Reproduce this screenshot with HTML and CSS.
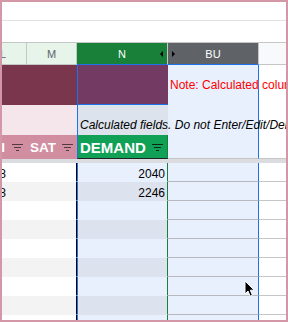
FILE: index.html
```html
<!doctype html>
<html>
<head>
<meta charset="utf-8">
<title>Sheet</title>
<link rel="stylesheet" href="styles.css">
</head>
<body>
<div class="frame">
  <div class="toolbar"></div>
  <div class="formula"></div>

  <div class="row colhead">
    <div class="c-l ch ch-l"><span>L</span></div>
    <div class="c-m ch">M</div>
    <div class="c-n ch ch-n">N<i class="tri tri-left"></i></div>
    <div class="c-bu ch ch-bu"><i class="tri tri-right"></i>BU</div>
    <div class="c-rest ch ch-rest"></div>
  </div>

  <div class="row r1">
    <div class="c-l"></div>
    <div class="c-m"></div>
    <div class="c-n"></div>
    <div class="c-bu"><span class="note">Note: Calculated columns</span></div>
    <div class="c-rest"></div>
  </div>

  <div class="row r2">
    <div class="c-l"></div>
    <div class="c-m"></div>
    <div class="c-n"><span class="calc">Calculated fields. Do not Enter/Edit/Delete</span></div>
    <div class="c-bu"></div>
    <div class="c-rest"></div>
  </div>

  <div class="row r3">
    <div class="c-l hd hd-l"><span>FRI</span><svg class="flt" width="11" height="7" viewBox="0 0 11 7"><path d="M0 .5h11M2 3.5h7M4 6.5h3" stroke="currentColor"/></svg></div>
    <div class="c-m hd"><span>SAT</span><svg class="flt" width="11" height="7" viewBox="0 0 11 7"><path d="M0 .5h11M2 3.5h7M4 6.5h3" stroke="currentColor"/></svg></div>
    <div class="c-n hd hd-n"><span>DEMAND</span><svg class="flt" width="11" height="7" viewBox="0 0 11 7"><path d="M0 .5h11M2 3.5h7M4 6.5h3" stroke="currentColor"/></svg></div>
    <div class="c-bu"></div>
    <div class="c-rest"></div>
  </div>

  <div class="freeze"></div>

  <div class="row dr">
    <div class="c-l"><span>18</span></div><div class="c-m"></div><div class="c-n">2040</div><div class="c-bu"></div><div class="c-rest"></div>
  </div>
  <div class="row dr alt">
    <div class="c-l"><span>18</span></div><div class="c-m"></div><div class="c-n">2246</div><div class="c-bu"></div><div class="c-rest"></div>
  </div>
  <div class="row dr">
    <div class="c-l"></div><div class="c-m"></div><div class="c-n"></div><div class="c-bu"></div><div class="c-rest"></div>
  </div>
  <div class="row dr alt">
    <div class="c-l"></div><div class="c-m"></div><div class="c-n"></div><div class="c-bu"></div><div class="c-rest"></div>
  </div>
  <div class="row dr">
    <div class="c-l"></div><div class="c-m"></div><div class="c-n"></div><div class="c-bu"></div><div class="c-rest"></div>
  </div>
  <div class="row dr alt">
    <div class="c-l"></div><div class="c-m"></div><div class="c-n"></div><div class="c-bu"></div><div class="c-rest"></div>
  </div>
  <div class="row dr">
    <div class="c-l"></div><div class="c-m"></div><div class="c-n"></div><div class="c-bu"></div><div class="c-rest"></div>
  </div>
  <div class="row dr alt">
    <div class="c-l"></div><div class="c-m"></div><div class="c-n"></div><div class="c-bu"></div><div class="c-rest"></div>
  </div>
  <div class="row dr">
    <div class="c-l"></div><div class="c-m"></div><div class="c-n"></div><div class="c-bu"></div><div class="c-rest"></div>
  </div>

  <svg class="cursor" width="12" height="18" viewBox="0 0 12 18"><path d="M1 1L1 14L4 11L6.2 16.2L8.4 15.2L6.3 10.2L10.3 10.2Z" fill="#000" stroke="#fff" stroke-width="1"/></svg>
</div>
</body>
</html>
```

FILE: styles.css
```css
*{ box-sizing:border-box; }
html,body{ margin:0; }
body{ width:288px; height:322px; padding:2px; background:#d497a8; }

.frame{
	position:relative;
	width:284px;
	height:318px;
	background:#fff;
	overflow:hidden;
	font-family:"Liberation Sans", Arial, sans-serif;
	font-size:12px;
}
.toolbar{ height:19px; border-bottom:1px solid #e1e3e1; }
.formula{ height:22px; border-bottom:1px solid #c4c7c5; }

.row{ display:flex; }
.c-l{ width:25px; flex:none; overflow:hidden; }
.c-m{ width:50px; flex:none; }
.c-n{ width:91px; flex:none; }
.c-bu{ width:91px; flex:none; }
.c-rest{ flex:1; }

/* column letters */
.colhead{ height:22px; }
.ch{
	display:flex;
	align-items:center;
	justify-content:center;
	font-size:11px;
	color:#5f6368;
	background:#e6f4ea;
	border-right:1px solid #c4c7c5;
	border-bottom:1px solid #c4c7c5;
}
.ch-l{ justify-content:flex-end; padding-right:20px; }
.ch-l span{ flex:none; }
.ch-n{ position:relative; background:#188038; color:#fff; border-bottom-color:#1a73e8; }
.ch-bu{ position:relative; background:#5f6368; color:#fff; border-bottom-color:#1a73e8; }
.ch-rest{ background:#f8f9fa; border-right:0; }
.tri{ position:absolute; top:8px; width:0; height:0; border-top:3px solid transparent; border-bottom:3px solid transparent; }
.tri-left{ right:4px; border-right:3px solid #000; }
.tri-right{ left:4px; border-left:3px solid #000; }

/* row 1 */
.r1{ height:40px; }
.r1 .c-l,.r1 .c-m{ background:#7a364d; }
.r1 .c-n{ background:#733b63; border-left:1px solid #1a73e8; border-bottom:1px solid #1a73e8; }
.r1 .c-bu{
	display:flex;
	align-items:center;
	padding-left:2px;
	background:#e8f0fe;
	border-right:1px solid #1a73e8;
}
.note{ position:relative; z-index:1; color:#f00; line-height:14px; white-space:nowrap; }

/* row 2 */
.r2{ height:30px; }
.r2 .c-l,.r2 .c-m{ background:#f4e6ea; }
.r2 .c-n{
	display:flex;
	align-items:flex-end;
	padding:0 0 3px 2px;
	background:#dde3ec;
	border-left:1px solid #1a73e8;
}
.r2 .c-bu{ background:#e8f0fe; border-right:1px solid #1a73e8; }
.calc{ position:relative; z-index:1; font-style:italic; line-height:14px; color:#000; white-space:nowrap; }

/* header row */
.r3{ height:24px; }
.r3 > div{ border-bottom:1px solid #c4c7c5; }
.hd{
	display:flex;
	align-items:center;
	justify-content:space-between;
	padding:1px 4px 0 3px;
	background:#d18ea0;
	color:#fff;
	font-weight:bold;
	font-size:13.5px;
}
.r3 .hd{ border-bottom-color:#d18ea0; }
.hd span,.hd svg{ flex:none; }
.hd-l{ justify-content:flex-end; }
.hd-l span{ margin-right:7px; }
.hd-n{ padding-left:2px; font-size:15px; background:#11a156; border-left:1px solid #1a73e8; border-right:1px solid #188038; }
.r3 .hd-n{ border-bottom-color:#202124; }
.flt{ display:block; color:rgba(0,0,0,.6); }
.hd-n .flt{ color:rgba(0,0,0,.75); }
.r3 .c-bu{ background:#e8f0fe; border-right:1px solid #1a73e8; }

.freeze{ height:4px; background:#dadce0; }

/* data rows */
.dr{ height:19px; }
.dr > div{ display:flex; align-items:flex-end; line-height:14px; border-bottom:1px solid transparent; }
.dr .c-l{ justify-content:flex-end; padding-right:21px; }
.dr .c-l span{ flex:none; }
.dr .c-m{ border-right:1px solid #000; }
.dr .c-n{ justify-content:flex-end; padding-right:2px; background:#e8f0fe; border-left:1px solid #1a73e8; border-right:1px solid #188038; }
.dr .c-bu{ background:#e8f0fe; border-right:1px solid #1a73e8; border-bottom-color:#b7b9bd; }
.dr .c-rest{ border-bottom-color:#c4c7c5; }
.dr.alt .c-l,.dr.alt .c-m{ background:#f3f3f3; }
.dr.alt .c-n{ background:#dde3ee; }

.cursor{ position:absolute; left:242px; top:278px; }
```
